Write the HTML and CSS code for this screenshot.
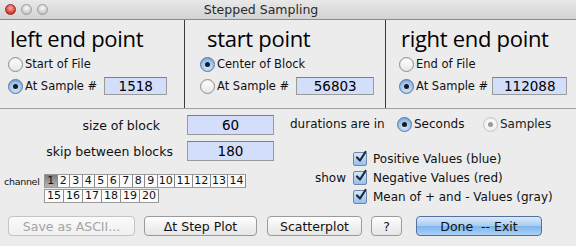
FILE: index.html
```html
<!DOCTYPE html>
<html lang="en">
<head>
    <meta charset="UTF-8">
    <title>Stepped Sampling</title>
    <link rel="stylesheet" href="styles.css">
</head>
<body>
    <div class="window">
        <header class="titlebar">
            <div class="lights">
                <span class="light red"></span>
                <span class="light"></span>
                <span class="light"></span>
            </div>
            <div class="title">Stepped Sampling</div>
        </header>

        <section class="points">
            <div class="point point-left">
                <h2>left end point</h2>
                <div class="opt"><span class="radio"></span>Start of File</div>
                <div class="opt"><span class="radio on"></span>At Sample #<span class="field f-left">1518</span></div>
            </div>
            <div class="point point-mid">
                <h2>start point</h2>
                <div class="opt"><span class="radio on"></span>Center of Block</div>
                <div class="opt"><span class="radio"></span>At Sample #<span class="field f-mid">56803</span></div>
            </div>
            <div class="point point-right">
                <h2>right end point</h2>
                <div class="opt"><span class="radio"></span>End of File</div>
                <div class="opt"><span class="radio on"></span>At Sample #<span class="field f-right">112088</span></div>
            </div>
        </section>

        <section class="settings">
            <div class="col-left">
                <div class="row">
                    <span class="lbl lbl-size">size of block</span>
                    <span class="field f-wide">60</span>
                </div>
                <div class="row">
                    <span class="lbl lbl-skip">skip between blocks</span>
                    <span class="field f-wide">180</span>
                </div>
                <div class="channels">
                    <span class="ch-label">channel</span>
                    <div class="ch-rows">
                        <div class="ch-row">
                            <span class="cell sel">1</span><span class="cell">2</span><span class="cell">3</span><span class="cell">4</span><span class="cell">5</span><span class="cell">6</span><span class="cell">7</span><span class="cell">8</span><span class="cell">9</span><span class="cell two">10</span><span class="cell two">11</span><span class="cell two">12</span><span class="cell two">13</span><span class="cell two">14</span>
                        </div>
                        <div class="ch-row">
                            <span class="cell wide">15</span><span class="cell wide">16</span><span class="cell wide">17</span><span class="cell wide">18</span><span class="cell wide">19</span><span class="cell wide">20</span>
                        </div>
                    </div>
                </div>
            </div>

            <div class="col-right">
                <div class="durations">
                    <span class="dur-label">durations are in</span>
                    <span class="opt"><span class="radio on"></span>Seconds</span>
                    <span class="opt dim"><span class="radio dot-dim"></span>Samples</span>
                </div>
                <div class="show">
                    <span class="show-label">show</span>
                    <div class="checks">
                        <div class="check"><span class="box"><svg viewBox="0 0 14 14" width="14" height="14"><path d="M3 7.5 L6 10.5 L11.5 2" fill="none" stroke="#1c2a3c" stroke-width="2.2" stroke-linecap="round" stroke-linejoin="round"/></svg></span>Positive Values (blue)</div>
                        <div class="check"><span class="box"><svg viewBox="0 0 14 14" width="14" height="14"><path d="M3 7.5 L6 10.5 L11.5 2" fill="none" stroke="#1c2a3c" stroke-width="2.2" stroke-linecap="round" stroke-linejoin="round"/></svg></span>Negative Values (red)</div>
                        <div class="check"><span class="box"><svg viewBox="0 0 14 14" width="14" height="14"><path d="M3 7.5 L6 10.5 L11.5 2" fill="none" stroke="#1c2a3c" stroke-width="2.2" stroke-linecap="round" stroke-linejoin="round"/></svg></span>Mean of + and - Values (gray)</div>
                    </div>
                </div>
            </div>
        </section>

        <footer class="buttons">
            <button class="btn b-save" disabled>Save as ASCII...</button>
            <button class="btn b-step">&Delta;t Step Plot</button>
            <button class="btn b-scatter">Scatterplot</button>
            <button class="btn b-help">?</button>
            <button class="btn b-done">Done  -- Exit</button>
        </footer>
    </div>
</body>
</html>
```

FILE: styles.css
```css
* {
    box-sizing: border-box;
    margin: 0;
    padding: 0;
}

body {
    font-family: 'DejaVu Sans', sans-serif;
    font-size: 11.5px;
    color: #111;
    background: #ececec;
    width: 576px;
    height: 246px;
    overflow: hidden;
}

.window {
    width: 576px;
    height: 246px;
    background: #ececec;
}

/* title bar */
.titlebar {
    height: 20px;
    display: flex;
    align-items: center;
    background: linear-gradient(#e8e8e8, #d3d3d3);
    border-bottom: 1px solid #8c8c8c;
}

.lights {
    display: flex;
    gap: 5px;
    width: 50px;
    padding-left: 5px;
}

.light {
    width: 11px;
    height: 11px;
    border-radius: 50%;
    background: radial-gradient(circle at 50% 35%, #fafafa, #c8c8c8 70%, #a8a8a8);
    border: 1px solid #9a9a9a;
}

.light.red {
    background: radial-gradient(circle at 50% 35%, #ffb0a8, #e0443a 60%, #a8221c);
    border-color: #8e2a24;
}

.title {
    flex: 1;
    text-align: center;
    padding-right: 104px;
    font-size: 12.5px;
    color: #2a2a2a;
}

/* end points */
.points {
    display: grid;
    grid-template-columns: 184px 1px 200px 1px 1fr;
    height: 89px;
    border-bottom: 1px solid #a0a0a0;
}

.point {
    padding-top: 4px;
}

.point-left {
    padding-left: 8px;
    border-right: 1px solid #3c3c3c;
    grid-column: 1 / 3;
}

.point-mid {
    padding-left: 15px;
    border-right: 1px solid #3c3c3c;
    grid-column: 3 / 5;
}

.point-right {
    padding-left: 13px;
}

.point h2 {
    font-family: 'Open Sans', sans-serif;
    font-weight: normal;
    font-size: 22px;
    line-height: 29px;
    margin-left: 2px;
    color: #000;
    letter-spacing: -0.3px;
}

.point-mid h2 {
    margin-left: 7px;
}

.opt {
    display: flex;
    align-items: center;
    height: 22px;
}

.radio {
    display: inline-block;
    width: 15px;
    height: 15px;
    margin-right: 2px;
    border-radius: 50%;
    border: 1px solid #8d8d8d;
    background: linear-gradient(#ffffff, #e6e6e6);
    box-shadow: inset 0 1px 1px rgba(0,0,0,0.1);
    position: relative;
    flex: none;
}

.radio.on {
    border-color: #5a77a6;
    background: radial-gradient(circle at 50% 70%, #d2e6fb, #8fbbea 70%, #6c9ad2);
}

.radio.on::after,
.radio.dot-dim::after {
    content: "";
    position: absolute;
    left: 4px;
    top: 4px;
    width: 5px;
    height: 5px;
    border-radius: 50%;
    background: #1a1a1a;
}

.radio.dot-dim {
    border-color: #c4c4c4;
    background: linear-gradient(#fbfbfb, #efefef);
}

.radio.dot-dim::after {
    background: #9a9a9a;
}

.field {
    display: inline-block;
    height: 18px;
    line-height: 16px;
    border: 1px solid #9a9a9a;
    border-top-color: #7f7f7f;
    background: #d3defb;
    text-align: center;
    font-size: 13.5px;
    color: #000;
}

.f-left {
    width: 63px;
    margin-left: 7px;
}

.f-mid {
    width: 78px;
    margin-left: 7px;
}

.f-right {
    width: 75px;
    margin-left: 4px;
}

/* settings */
.settings {
    display: flex;
    height: 101px;
}

.col-left {
    width: 290px;
    padding-top: 3px;
}

.row {
    display: flex;
    align-items: center;
    height: 26px;
}

.lbl {
    width: 187px;
    text-align: right;
    font-size: 12.5px;
}

.lbl-size {
    padding-right: 27px;
}

.lbl-skip {
    padding-right: 14px;
}

.f-wide {
    width: 87px;
    height: 20px;
    line-height: 18px;
}

.channels {
    display: flex;
    align-items: flex-start;
    margin-top: 10px;
}

.ch-label {
    width: 44px;
    padding-left: 4px;
    padding-top: 1px;
    font-size: 9.5px;
    line-height: 13px;
    letter-spacing: -0.3px;
}

.ch-rows {
    display: flex;
    flex-direction: column;
    align-items: flex-start;
    gap: 1px;
}

.ch-row {
    display: flex;
    border: 1px solid #9a9a9a;
    border-right: none;
    background: #fbfbfb;
}

.cell {
    width: 12.5px;
    height: 12px;
    line-height: 12px;
    text-align: center;
    font-size: 11px;
    border-right: 1px solid #8c8c8c;
}

.cell.two {
    width: 17.7px;
}

.cell.wide {
    width: 19px;
}

.cell.sel {
    background: linear-gradient(#7c7c7c, #b4b4b4);
}

.col-right {
    flex: 1;
}

.durations {
    display: flex;
    align-items: center;
    height: 22px;
    margin-top: 4px;
    font-size: 12px;
}

.dur-label {
    width: 107px;
}

.durations .opt {
    width: 86px;
}

.durations .dim {
    color: #222;
}

.show {
    display: flex;
    align-items: center;
    margin-top: 14px;
}

.show-label {
    width: 63px;
    padding-left: 25px;
    font-size: 12px;
}

.check {
    display: flex;
    align-items: center;
    height: 19px;
    font-size: 12px;
}

.box {
    width: 14px;
    height: 14px;
    margin-right: 6px;
    border: 1px solid #6e86ab;
    border-radius: 2px;
    background: linear-gradient(#d6e7fa, #96c0ec);
    position: relative;
}

.box svg {
    position: absolute;
    left: 0;
    top: -3px;
}

/* buttons */
.buttons {
    display: flex;
    align-items: center;
    padding: 6px 0 0 8px;
}

.btn {
    height: 20px;
    font-family: 'DejaVu Sans', sans-serif;
    font-size: 12.5px;
    color: #111;
    border: 1px solid #9a9a9a;
    border-radius: 4px;
    background: linear-gradient(#ffffff, #f1f1f1 50%, #e6e6e6);
    white-space: pre;
}

.b-save {
    width: 127px;
    color: #a4a4a4;
    border-color: #c4c4c4;
    background: linear-gradient(#fafafa, #f0f0f0);
}

.b-step {
    width: 113px;
    margin-left: 9px;
}

.b-scatter {
    width: 95px;
    margin-left: 10px;
}

.b-help {
    width: 31px;
    margin-left: 9px;
}

.b-done {
    width: 126px;
    margin-left: 14px;
    border-color: #53709f;
    background: linear-gradient(#dbeafb, #a5ccf3 50%, #7fb5ec 51%, #a9d2f7);
}
```
